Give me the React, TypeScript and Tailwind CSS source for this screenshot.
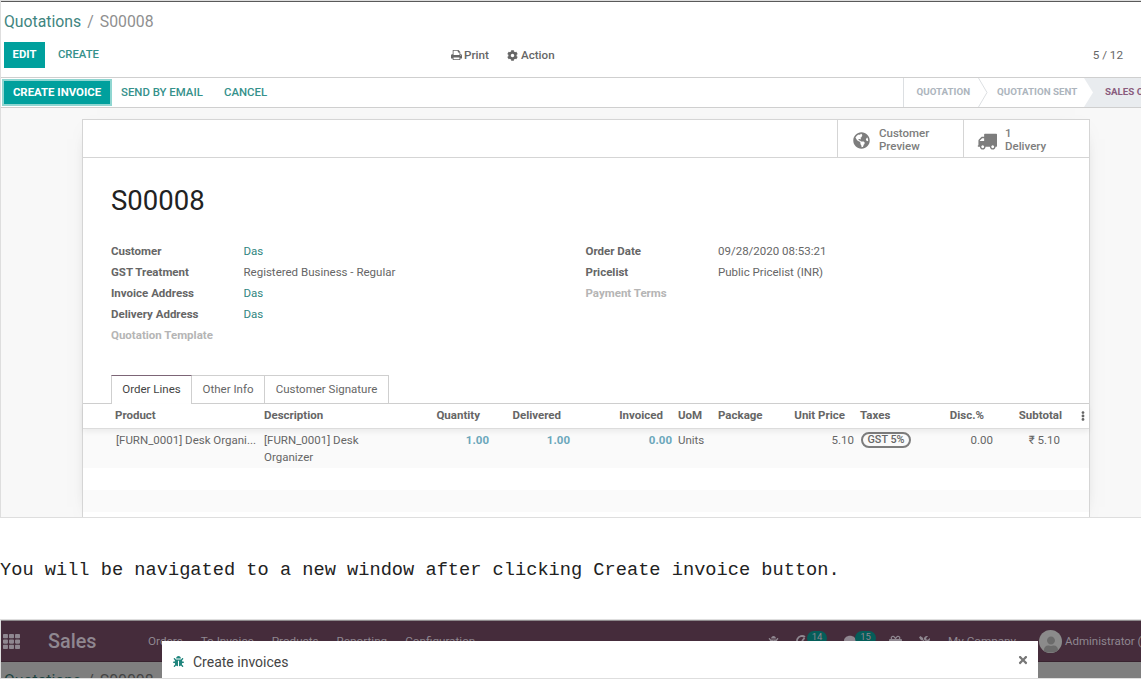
import { ReactNode } from 'react';
import {
  FaBug,
  FaCog,
  FaComment,
  FaEllipsisV,
  FaGift,
  FaGlobeAmericas,
  FaTh,
  FaTimes,
  FaTools,
  FaUser,
} from 'react-icons/fa';

const leftFields = [
  { label: 'Customer', value: 'Das', link: true },
  { label: 'GST Treatment', value: 'Registered Business - Regular' },
  { label: 'Invoice Address', value: 'Das', link: true },
  { label: 'Delivery Address', value: 'Das', link: true },
  { label: 'Quotation Template', value: '' },
];

const rightFields = [
  { label: 'Order Date', value: '09/28/2020 08:53:21' },
  { label: 'Pricelist', value: 'Public Pricelist (INR)' },
  { label: 'Payment Terms', value: '' },
];

const menuItems = ['Orders', 'To Invoice', 'Products', 'Reporting', 'Configuration'];

const tableGrid = 'grid grid-cols-[178px_151px_81px_81px_101px_39px_66px_77px_89px_51px_70px_22px]';

type Field = { label: string; value: string; link?: boolean };

function PrintIcon() {
  return (
    <svg viewBox="0 0 1664 1792" className="h-3 w-[11px]" fill="currentColor">
      <path d="M384 1536h896v-256h-896v256zM384 896h896v-384h-160q-40 0-68-28t-28-68v-160h-640v640zM1536 960q0-26-19-45t-45-19-45 19-19 45 19 45 45 19 45-19 19-45zM1664 960v416q0 13-9.5 22.5t-22.5 9.5h-224v160q0 40-28 68t-68 28h-960q-40 0-68-28t-28-68v-160h-224q-13 0-22.5-9.5t-9.5-22.5v-416q0-79 56.5-135.5t135.5-56.5h64v-544q0-40 28-68t68-28h672q40 0 88 20t76 48l152 152q28 28 48 76t20 88v256h64q79 0 135.5 56.5t56.5 135.5z" />
    </svg>
  );
}

function TruckIcon() {
  return (
    <svg viewBox="0 0 1792 1792" className="-ml-px h-5 w-5" fill="currentColor">
      <path d="M640 1408q0-52-38-90t-90-38-90 38-38 90 38 90 90 38 90-38 38-90zM256 896h384v-256h-158q-13 0-22 9l-195 195q-9 9-9 22v30zM1536 1408q0-52-38-90t-90-38-90 38-38 90 38 90 90 38 90-38 38-90zM1792 320v1024q0 15-4 26.5t-13.5 18.5-16.5 11.5-23.5 6-22.5 2-25.5 0-22.5-.5q0 106-75 181t-181 75-181-75-75-181h-384q0 106-75 181t-181 75-181-75-75-181h-64q-3 0-22.5.5t-25.5 0-22.5-2-23.5-6-16.5-11.5-13.5-18.5-4-26.5q0-26 19-45t45-19v-320q0-8-.5-35t0-38 2.5-34.5 6.5-37 14-30.5 22.5-30l198-198q19-19 50.5-32t58.5-13h160v-192q0-26 19-45t45-19h1024q26 0 45 19t19 45z" />
    </svg>
  );
}

function FieldGroup({ fields }: { fields: Field[] }) {
  return (
    <div className="flex flex-col">
      {fields.map((field) => (
        <div key={field.label} className="flex h-[21.2px] items-center">
          <span className={field.value ? 'w-[132.5px] font-bold' : 'w-[132.5px] font-bold text-[#b5b5b5]'}>
            {field.label}
          </span>
          <span className={field.link ? 'text-[#2f8580]' : ''}>{field.value}</span>
        </div>
      ))}
    </div>
  );
}

function StatButton({ icon, children }: { icon: ReactNode; children: ReactNode }) {
  return (
    <div className="flex w-[126px] items-center border-l border-[#d5d5d5] pl-[14px] text-[#7d7d7d]">
      <span className="flex w-[27px] pt-1">{icon}</span>
      <span className="pt-[2px] text-[11.5px] leading-[13px] font-medium">{children}</span>
    </div>
  );
}

function StatusBar() {
  return (
    <div className="flex h-[30px] shrink-0 items-center border-b border-[#cfcfcf] pl-px text-[11.4px] font-medium text-[#35918b]">
      <button className="flex h-[27px] w-[110px] items-center justify-center border-2 border-[#8fd6d1] bg-[#00a09d] pt-px font-bold text-white">
        CREATE INVOICE
      </button>
      <button className="ml-[9px] w-[83px] pt-px text-left whitespace-nowrap">SEND BY EMAIL</button>
      <button className="ml-[20px] pt-px">CANCEL</button>
      <div className="ml-auto flex h-full w-[238px] items-center overflow-hidden border-l border-[#dcdfe2] text-[9.75px] font-bold whitespace-nowrap text-[#adb5bd]">
        <span className="w-[74px] pl-[12.5px]">QUOTATION</span>
        <svg viewBox="0 0 10 29" className="h-[29px] w-[10px]" fill="none" stroke="#dcdfe2">
          <path d="M0.5 0L9 14.5L0.5 29" />
        </svg>
        <span className="w-[96px] pl-[9px]">QUOTATION SENT</span>
        <div className="flex h-full w-[57px] shrink-0 items-center bg-[#e9ecef] text-[#8a5c7d]">
          <svg viewBox="0 0 10 29" className="h-[29px] w-[10px] shrink-0" fill="white">
            <path d="M0 0L9 14.5L0 29Z" />
          </svg>
          <span className="pl-[11px]">SALES ORDER</span>
        </div>
      </div>
    </div>
  );
}

function OrderLines() {
  return (
    <div>
      <div className={`${tableGrid} relative h-[25px] items-center border-b border-[#dcdcdc] font-bold shadow-[0_3px_5px_rgba(0,0,0,0.06)]`}>
        <span className="pl-8">Product</span>
        <span className="pl-[3px]">Description</span>
        <span className="pr-[13px] text-right">Quantity</span>
        <span className="pr-[13px] text-right">Delivered</span>
        <span className="pr-[12px] text-right">Invoiced</span>
        <span className="pl-[3px]">UoM</span>
        <span className="pl-1">Package</span>
        <span className="pr-[12px] text-right whitespace-nowrap">Unit Price</span>
        <span className="pl-[3px]">Taxes</span>
        <span className="pr-[13px] text-right">Disc.%</span>
        <span className="pr-[5px] text-right">Subtotal</span>
        <FaEllipsisV className="ml-[11px] h-[10px] w-[10px]" />
      </div>
      <div className={`${tableGrid} h-[39px] bg-[#fafafa] pt-[3px] leading-[17px]`}>
        <span className="pl-[33px] whitespace-nowrap">[FURN_0001] Desk Organi...</span>
        <span className="pl-[3px]">
          [FURN_0001] Desk
          <br />
          Organizer
        </span>
        <span className="pr-1 text-right font-bold text-[#6ba7bb]">1.00</span>
        <span className="pr-1 text-right font-bold text-[#6ba7bb]">1.00</span>
        <span className="pr-[3px] text-right font-bold text-[#6ba7bb]">0.00</span>
        <span className="pl-[3px]">Units</span>
        <span />
        <span className="pr-[3px] text-right">5.10</span>
        <span className="pl-1">
          <span className="flex h-4 w-[50px] items-center justify-center rounded-full border-2 border-[#7d7d7d] text-[10.8px] font-medium">
            GST 5%
          </span>
        </span>
        <span className="pr-1 text-right">0.00</span>
        <span className="pr-[7px] text-right">₹ 5.10</span>
      </div>
      <div className="h-[22px]" />
      <div className="h-[22px] bg-[#fafafa]" />
    </div>
  );
}

function QuotationScreen() {
  return (
    <section className="flex h-[518px] flex-col overflow-hidden border-t border-b border-l border-[#dedede] bg-white">
      <div className="h-px shrink-0 bg-[#5a5a5a]" />
      <div className="flex h-[76px] shrink-0 flex-col border-b border-[#cfcfcf] pl-[3px]">
        <div className="mt-[10px] h-5 text-[15.8px] leading-5 text-[#8f8f8f]">
          <span className="text-[#3f8580]">Quotations</span>
          <span className="px-[6px]">/</span>
          <span>S00008</span>
        </div>
        <div className="mt-[10px] flex h-[26px] items-center text-[11.3px] font-medium text-[#666]">
          <button className="h-[26px] w-[41px] bg-[#00a09d] pt-px font-bold text-white">EDIT</button>
          <button className="ml-[13px] w-[42px] pt-px text-left text-[#35918b]">CREATE</button>
          <button className="ml-[351px] flex w-[56px] items-center gap-[2px] pt-px text-[11.7px]">
            <PrintIcon />
            Print
          </button>
          <button className="flex items-center gap-[3px] pt-px text-[11.6px]">
            <FaCog className="h-[11px] w-[11px]" />
            Action
          </button>
          <span className="mr-[18px] ml-auto pt-px text-[11.7px] font-normal">5 / 12</span>
        </div>
      </div>
      <StatusBar />
      <div className="flex grow bg-[#f8f8f8] pt-[11px] pl-[81px] text-[11.5px] text-[#666]">
        <div className="flex w-[1008px] flex-col border border-b-0 border-[#d5d5d5] bg-white shadow-[0_5px_20px_-15px_rgba(0,0,0,0.6)]">
          <div className="flex h-[38px] justify-end border-b border-[#d5d5d5]">
            <StatButton icon={<FaGlobeAmericas className="ml-px h-[17px] w-[17px]" />}>
              Customer
              <br />
              Preview
            </StatButton>
            <StatButton icon={<TruckIcon />}>
              1
              <br />
              Delivery
            </StatButton>
          </div>
          <h1 className="mt-[25px] pl-7 text-[27.5px] leading-9 text-[#222]">S00008</h1>
          <div className="mt-[21.6px] flex h-[106px] pl-7">
            <div className="w-[474.5px]">
              <FieldGroup fields={leftFields} />
            </div>
            <FieldGroup fields={rightFields} />
          </div>
          <div className="mt-[28.4px] flex h-[29px] items-stretch">
            <div className="w-7 border-b border-[#cfcfcf]" />
            <div className="flex w-[81px] items-center justify-center border-x border-t border-[#cfcfcf] border-t-[#7c6576] text-[#444]">Order Lines</div>
            <div className="flex w-[73px] items-center justify-center border-t border-r border-b border-[#cfcfcf]">Other Info</div>
            <div className="flex w-[124px] items-center justify-center border-t border-r border-b border-[#cfcfcf]">Customer Signature</div>
            <div className="grow border-b border-[#cfcfcf]" />
          </div>
          <OrderLines />
        </div>
      </div>
    </section>
  );
}

function InvoiceDialogScreen() {
  return (
    <section className="relative h-[60px] overflow-hidden border-y border-l border-[#dedede] bg-[#7f7f7f]">
      <div className="h-px bg-[#8e8a8c]" />
      <nav className="flex h-[41px] items-center border-b border-[#38232f] bg-[#452c3b] pl-[2px] text-[11.7px] text-[#8f8790]">
        <FaTh className="h-[17px] w-[17px]" />
        <span className="ml-[28px] w-[100px] pt-px text-[19.8px] font-medium">Sales</span>
        <div className="flex gap-[18px] pt-px">
          {menuItems.map((item) => (
            <span key={item}>{item}</span>
          ))}
        </div>
        <div className="ml-auto flex items-center">
          <FaBug className="h-[11px] w-[11px]" />
          <svg viewBox="0 0 12 12" className="ml-[17px] h-3 w-3" fill="none" stroke="currentColor" strokeWidth="1.8">
            <path d="M9 2A5 5 0 1 0 11 6M6 6L8.5 3" />
          </svg>
          <span className="mb-[7px] -ml-px flex h-[14px] w-[20px] items-center justify-center rounded-full bg-[#055d59] text-[9.5px]">14</span>
          <FaComment className="ml-[17px] h-3 w-3" />
          <span className="mb-[7px] -ml-px flex h-[14px] w-[21px] items-center justify-center rounded-full bg-[#055d59] text-[9.5px]">15</span>
          <FaGift className="ml-[13px] h-[13px] w-[13px]" />
          <FaTools className="ml-[17px] h-[11px] w-[11px]" />
          <span className="ml-[18px] w-[91px] pt-px">My Company</span>
          <span className="flex h-[23px] w-[23px] items-end justify-center overflow-hidden rounded-full bg-[#8b8b8b]">
            <FaUser className="h-[17px] w-[14px] text-[#6b6b6b]" />
          </span>
          <span className="ml-[3px] w-[76px] pt-px text-[11.5px] whitespace-nowrap">Administrator (</span>
        </div>
      </nav>
      <div className="pt-[9px] pl-[3px] text-[15.8px] leading-5 text-[#444]">
        <span className="text-[#1d4340]">Quotations</span>
        <span className="px-[6px]">/</span>
        <span>S00008</span>
      </div>
      <div className="absolute top-[21px] left-[161px] flex h-[37px] w-[876px] items-center bg-white px-[11px] pt-1">
        <FaBug className="h-[11px] w-[11px] text-[#20857d]" />
        <span className="ml-[9px] pt-px text-[14px] text-[#444]">Create invoices</span>
        <FaTimes className="mr-[-2px] mb-[3px] ml-auto h-[12px] w-[12px] text-[#777]" />
      </div>
    </section>
  );
}

export default function App() {
  return (
    <main className="h-[680px] w-[1141px] overflow-hidden bg-white font-['Roboto',sans-serif]">
      <QuotationScreen />
      <p className="flex h-[101px] items-center pt-[2px] font-['Liberation_Mono',monospace] text-[18.67px] whitespace-pre text-[#222]">
        You will be navigated to a new window after clicking Create invoice button.
      </p>
      <InvoiceDialogScreen />
    </main>
  );
}
